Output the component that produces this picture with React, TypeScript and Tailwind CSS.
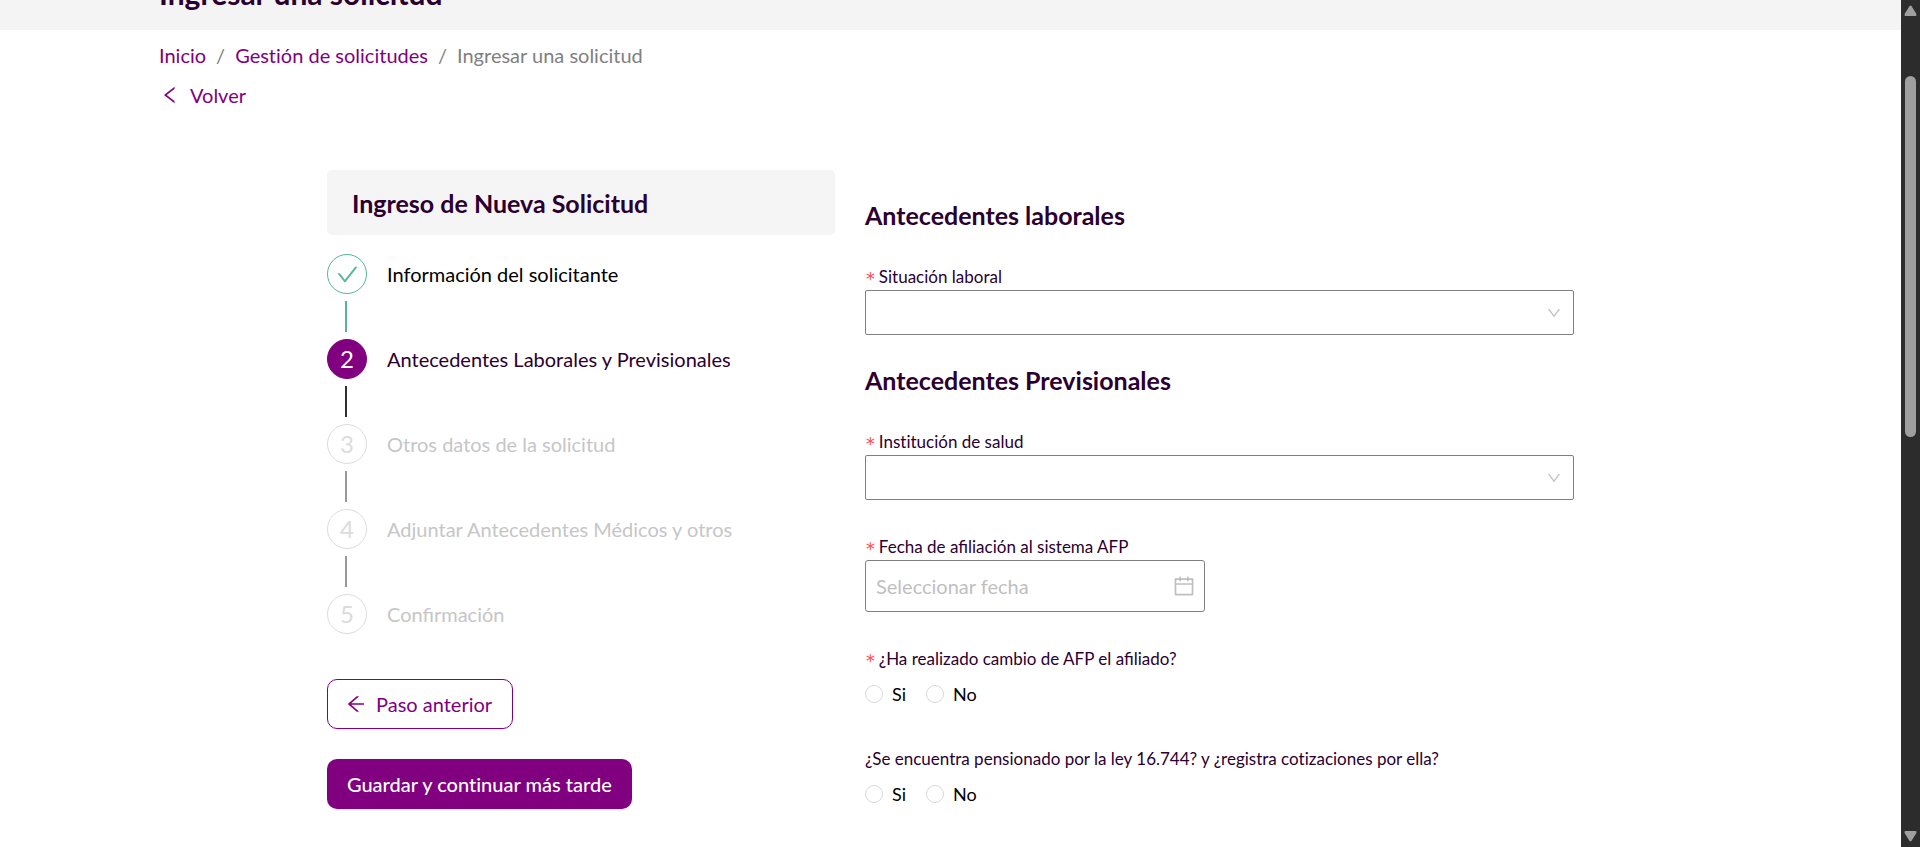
import React from "react";
import {
  AiOutlineArrowLeft,
  AiOutlineCalendar,
  AiOutlineCheck,
  AiOutlineDown,
  AiOutlineLeft,
} from "react-icons/ai";

type StepState = "done" | "current" | "pending";

const steps: { title: string; state: StepState }[] = [
  { title: "Información del solicitante", state: "done" },
  { title: "Antecedentes Laborales y Previsionales", state: "current" },
  { title: "Otros datos de la solicitud", state: "pending" },
  { title: "Adjuntar Antecedentes Médicos y otros", state: "pending" },
  { title: "Confirmación", state: "pending" },
];

const circleStyles: Record<StepState, string> = {
  done: "border-[#52b794] text-[#52b794]",
  current: "border-[#800080] bg-[#800080] text-white",
  pending: "border-[#dcdcdc] text-[#dcdcdc]",
};

const titleStyles: Record<StepState, string> = {
  done: "text-black",
  current: "text-[#2b0030]",
  pending: "text-[#c6c6c6]",
};

const lineStyles: Record<StepState, string> = {
  done: "bg-[#52b794]",
  current: "bg-[#303030]",
  pending: "bg-[#999999]",
};

function Required() {
  return (
    <span className="mr-[3px] pt-1 font-['DejaVu_Sans_Mono',monospace] text-lg leading-[18px] text-[#ff4d4f]">
      *
    </span>
  );
}

function Steps() {
  return (
    <ol className="mt-[19px] [font-variant-ligatures:normal]">
      {steps.map((step, i) => (
        <li key={step.title}>
          <div className="flex items-center gap-5">
            <span
              className={`flex size-10 shrink-0 items-center justify-center rounded-full border text-2xl leading-6 ${circleStyles[step.state]}`}
            >
              {step.state === "done" ? <AiOutlineCheck className="size-[25px]" /> : i + 1}
            </span>
            <span className={`text-xl ${titleStyles[step.state]}`}>{step.title}</span>
          </div>
          {i < steps.length - 1 && (
            <div className={`my-[7px] ml-[18px] h-[31px] w-0.5 ${lineStyles[step.state]}`} />
          )}
        </li>
      ))}
    </ol>
  );
}

function SelectField({ id, label }: { id: string; label: string }) {
  return (
    <div>
      <label htmlFor={id} className="flex items-center pb-px text-[17px] leading-6">
        <Required />
        {label}
      </label>
      <div className="grid items-center">
        <select
          id={id}
          className="col-start-1 row-start-1 h-[45px] w-full appearance-none rounded-xs border border-[#7f7f7f] bg-white px-3 text-xl"
        >
          <option value=""></option>
        </select>
        <AiOutlineDown className="pointer-events-none col-start-1 row-start-1 mr-3 size-4 justify-self-end text-[#bfbfbf]" />
      </div>
    </div>
  );
}

function RadioField({ name, label, required }: { name: string; label: React.ReactNode; required?: boolean }) {
  return (
    <fieldset>
      <legend className="flex items-center text-[17px] leading-6">
        {required && <Required />}
        {label}
      </legend>
      <div className="mt-[11px] flex gap-5 text-lg leading-6 text-black">
        {["Si", "No"].map((option) => (
          <label key={option} className="flex items-center gap-[9px]">
            <input
              type="radio"
              name={name}
              value={option}
              className="size-[18px] appearance-none rounded-full border border-[#d9d9d9] bg-white checked:border-[5px] checked:border-[#800080]"
            />
            {option}
          </label>
        ))}
      </div>
    </fieldset>
  );
}

function ScrollRail() {
  return (
    <div aria-hidden="true" className="flex w-[19px] shrink-0 flex-col items-center bg-[#2c2c2c] py-[5px]">
      <svg viewBox="0 0 13 11" className="h-[11px] w-[13px] fill-[#9f9f9f]">
        <path d="M5.4 1.2Q6.5 0 7.6 1.2L12.4 9Q13 11 11.5 11H1.5Q0 11 .6 9Z" />
      </svg>
      <div className="grow-[60] basis-0" />
      <div className="w-[11px] grow-[361] basis-0 rounded-full bg-[#9f9f9f]" />
      <div className="grow-[394] basis-0" />
      <svg viewBox="0 0 13 11" className="h-[11px] w-[13px] fill-[#9f9f9f]">
        <path d="M5.4 9.8Q6.5 11 7.6 9.8L12.4 2Q13 0 11.5 0H1.5Q0 0 .6 2Z" />
      </svg>
    </div>
  );
}

export default function App() {
  return (
    <div className="flex h-screen overflow-hidden bg-white font-[Lato,sans-serif] text-[#2b0030] [font-variant-ligatures:none]">
      <div className="min-w-0 flex-1 overflow-hidden">
        <header className="flex h-[30px] items-end overflow-hidden bg-[#f4f4f4] px-[159px] pb-[21px]">
          <h1 className="text-3xl leading-8 font-bold">Ingresar una solicitud</h1>
        </header>

        <div className="px-[159px] pt-[11px]">
          <nav aria-label="Ruta" className="flex gap-2.5 text-xl text-[#808080]">
            <a href="#inicio" className="text-[#800080]">Inicio</a>
            <span>/</span>
            <a href="#gestion" className="text-[#800080]">Gestión de solicitudes</a>
            <span>/</span>
            <span>Ingresar una solicitud</span>
          </nav>
          <a href="#volver" className="mt-3 flex w-fit items-center gap-[9px] text-xl text-[#800080]">
            <AiOutlineLeft className="size-[22px]" />
            Volver
          </a>
        </div>

        <main className="grid grid-cols-[508fr_709fr] gap-x-[30px] px-[327px] pt-[61px]">
          <section>
            <div className="rounded-[5px] bg-[#f5f5f5] px-[25px] pt-[17px] pb-[15px]">
              <h2 className="text-[25px] leading-[33px] font-bold">Ingreso de Nueva Solicitud</h2>
            </div>
            <Steps />
            <div className="mt-[45px] flex flex-col items-start gap-[30px]">
              <button
                type="button"
                className="flex h-[50px] items-center gap-[9px] rounded-[10px] border border-[#800080] bg-white pr-5 pl-[17px] text-xl text-[#800080] shadow-[0_2px_0_rgba(0,0,0,0.02)]"
              >
                <AiOutlineArrowLeft className="size-[22px]" />
                Paso anterior
              </button>
              <button
                type="button"
                className="h-[50px] rounded-[10px] bg-[#800080] px-5 text-xl font-medium text-white shadow-[0_2px_0_rgba(0,0,0,0.04)]"
              >
                Guardar y continuar más tarde
              </button>
            </div>
          </section>

          <form className="pt-[30px]">
            <h2 className="mb-[35px] text-[25px] leading-[30px] font-bold">Antecedentes laborales</h2>
            <SelectField id="situacion" label="Situación laboral" />
            <h2 className="mt-[30px] mb-[35px] text-[25px] leading-[30px] font-bold">
              Antecedentes Previsionales
            </h2>
            <SelectField id="salud" label="Institución de salud" />

            <div className="mt-[35px]">
              <label
                htmlFor="fecha"
                className="flex items-center pb-px text-[17px] leading-6 [font-variant-ligatures:normal]"
              >
                <Required />
                Fecha de afiliación al sistema AFP
              </label>
              <div className="flex h-[52px] max-w-[340px] items-center rounded-[3px] border border-[#7f7f7f] pr-2 pl-2.5">
                <input
                  id="fecha"
                  type="text"
                  placeholder="Seleccionar fecha"
                  className="min-w-0 flex-1 text-xl outline-none placeholder:text-[#bfbfbf]"
                />
                <AiOutlineCalendar className="size-6 text-[#bfbfbf]" />
              </div>
            </div>

            <div className="mt-[35px] flex flex-col gap-[41px]">
              <RadioField
                name="cambio"
                label={
                  <span className="[font-variant-ligatures:normal]">
                    ¿Ha realizado cambio de AFP el afiliado?
                  </span>
                }
                required
              />
              <RadioField
                name="pensionado"
                label="¿Se encuentra pensionado por la ley 16.744? y ¿registra cotizaciones por ella?"
              />
            </div>
          </form>
        </main>
      </div>
      <ScrollRail />
    </div>
  );
}
